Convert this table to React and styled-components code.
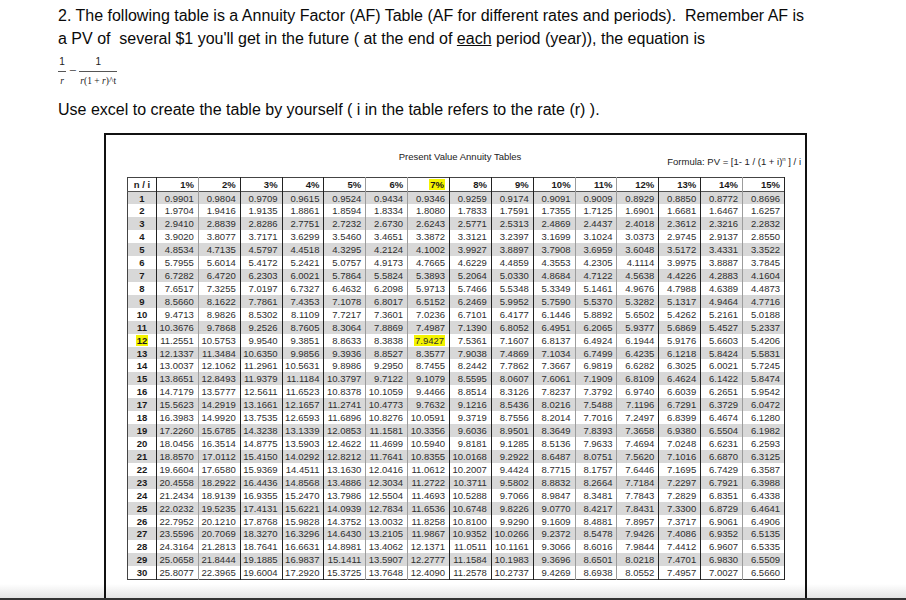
import React from "react";
import styled, { createGlobalStyle } from "styled-components";

const Global = createGlobalStyle`
  html, body { margin: 0; padding: 0; background: #fff; }
  body { font-family: "Liberation Sans", Arial, sans-serif; color: #1a1a1a; }
`;

const Page = styled.div`
  width: 906px;
  height: 600px;
  box-sizing: border-box;
  overflow: hidden;
  background: linear-gradient(to bottom, #fff 0, #fff 584px, #e4e4e4 598px);
  border-bottom: 2px solid #333;
`;

const Intro = styled.div`
  padding: 4px 0 0 58px;
  font-size: 16px;
  color: #0a0a0a;
`;

const Line = styled.div`
  line-height: 23px;
  white-space: pre;
  margin-top: ${(p) => p.$mt || 0}px;
`;

const Under = styled.span`
  text-decoration: underline;
`;

const Equation = styled.div`
  margin-top: 6px;
  height: 32px;
  display: flex;
  align-items: flex-start;
  gap: 2px;
  font-family: "Liberation Serif", serif;
  font-size: 9.5px;
  color: #222;
`;

const Frac = styled.div`
  display: inline-flex;
  flex-direction: column;
  align-items: center;
  min-width: ${(p) => p.$w || 8}px;
`;

const Num = styled.span`
  line-height: 12px;
  padding: 0 1px 3px;
  font-family: "Liberation Sans", sans-serif;
  font-size: 10px;
`;

const Den = styled.span`
  line-height: 12px;
  border-top: 1px solid #555;
  padding: 3px 1px 0;
  align-self: stretch;
  text-align: center;
  white-space: pre;
  font-style: ${(p) => (p.$italic ? "italic" : "normal")};
`;

const It = styled.i`
  font-style: italic;
`;

const Minus = styled.span`
  font-size: 13px;
  line-height: 12px;
  margin-top: 9px;
  padding: 0 1px;
`;

const Box = styled.div`
  margin: 12px 0 0 104px;
  width: 703px;
  height: 466px;
  box-sizing: border-box;
  border: 2px solid #111;
  border-bottom: none;
  padding: 0 4px 0 21px;
`;

const TitleRow = styled.div`
  height: 42px;
  box-sizing: border-box;
  padding-top: 16px;
  display: grid;
  grid-template-columns: 1fr auto 1fr;
  align-items: start;
  font-family: "Liberation Sans", sans-serif;
  font-size: 9.5px;
  color: #222;
`;

const Title = styled.div`
  grid-column: 2;
  line-height: 12px;
  margin-left: -8px;
`;

const Formula = styled.div`
  grid-column: 3;
  justify-self: end;
  line-height: 12px;
  margin-top: 2px;
  white-space: pre;
  sup {
    font-size: 6px;
    vertical-align: 4px;
  }
`;

const Table = styled.table`
  width: 658px;
  table-layout: fixed;
  border-collapse: collapse;
  border: 1px solid #444;
  font-family: "Liberation Sans", sans-serif;
  font-size: 9.5px;
  color: #2a2a2a;
`;

const HeadRow = styled.tr`
  height: 14px;
  background: #fff;
  border-bottom: 1px solid #555;
`;

const Row = styled.tr`
  height: 12.93px;
  background: ${(p) => (p.$odd ? "#d8d8d8" : "#fff")};
`;

const Cell = styled.td`
  padding: 0 4px 0 0;
  text-align: ${(p) => (p.$center ? "center" : "right")};
  font-weight: ${(p) => (p.$bold ? 700 : 400)};
  color: ${(p) => (p.$bold ? "#1a1a1a" : "#2e2e2e")};
  line-height: 11px;
  white-space: nowrap;
  overflow: hidden;
  border-right: 1px solid ${(p) => (p.$dark ? "#222" : "#9c9c9c")};
  ${(p) => (p.$center ? "padding: 0;" : "")}
`;

const Mark = styled.span`
  background: #f4f400;
  padding: 0 1px;
`;

const rates = Array.from({ length: 15 }, (_, i) => i + 1);
const periods = Array.from({ length: 30 }, (_, i) => i + 1);
const darkAfter = [true, false, true, true, true, false, false, true, true, true, false, false, true, true, false, true];

const af = (n, r) => ((1 - Math.pow(1 + r, -n)) / r).toFixed(4);

export default function App() {
  return (
    <Page>
      <Global />
      <Intro>
        <Line>
          2. The following table is a Annuity Factor (AF) Table (AF for different rates and periods).  Remember AF is
        </Line>
        <Line>
          a PV of  several $1 you'll get in the future ( at the end of <Under>each</Under> period (year)), the equation is
        </Line>
        <Equation>
          <Frac $w={8}>
            <Num>1</Num>
            <Den $italic>r</Den>
          </Frac>
          <Minus>−</Minus>
          <Frac>
            <Num>1</Num>
            <Den>
              <It>r</It>(1 + <It>r</It>)^t
            </Den>
          </Frac>
        </Equation>
        <Line $mt={10}>Use excel to create the table by yourself ( i in the table refers to the rate (r) ).</Line>
      </Intro>
      <Box>
        <TitleRow>
          <Title>Present Value Annuity Tables</Title>
          <Formula>
            Formula: PV = [1- 1 / (1 + i)<sup>n</sup> ] / i
          </Formula>
        </TitleRow>
        <Table>
          <colgroup>
            <col style={{ width: 29 }} />
            {rates.map((r) => (
              <col key={r} />
            ))}
          </colgroup>
          <thead>
            <HeadRow>
              <Cell $bold $center $dark={darkAfter[0]}>
                n / i
              </Cell>
              {rates.map((r) => (
                <Cell key={r} $bold $dark={darkAfter[r]}>
                  {r === 7 ? <Mark>{r}%</Mark> : `${r}%`}
                </Cell>
              ))}
            </HeadRow>
          </thead>
          <tbody>
            {periods.map((n) => (
              <Row key={n} $odd={n % 2 === 1}>
                <Cell $bold $center $dark={darkAfter[0]}>
                  {n === 12 ? <Mark>{n}</Mark> : n}
                </Cell>
                {rates.map((r) => (
                  <Cell key={r} $dark={darkAfter[r]}>
                    {n === 12 && r === 7 ? <Mark>{af(n, r / 100)}</Mark> : af(n, r / 100)}
                  </Cell>
                ))}
              </Row>
            ))}
          </tbody>
        </Table>
      </Box>
    </Page>
  );
}
